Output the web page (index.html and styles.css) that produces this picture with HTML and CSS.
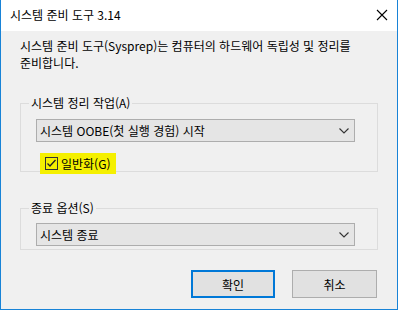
FILE: index.html
```html
<!DOCTYPE html>
<html lang="ko">
<head>
<meta charset="utf-8">
<link rel="stylesheet" href="styles.css">
</head>
<body>
<div class="window">
  <div class="titlebar">
    <span class="title">시스템 준비 도구 3.14</span>
    <svg class="close" width="12" height="12" viewBox="0 0 12 12"><path d="M1 1L11 11M11 1L1 11" stroke="#000" stroke-width="1.1" fill="none"/></svg>
  </div>
  <div class="content">
    <p class="desc">시스템 준비 도구(Sysprep)는 컴퓨터의 하드웨어 독립성 및 정리를<br>준비합니다.</p>
    <fieldset class="group g1">
      <legend>시스템 정리 작업(A)</legend>
      <div class="combo"><span>시스템 OOBE(첫 실행 경험) 시작</span>
        <svg class="chev" width="10" height="6" viewBox="0 0 10 6"><path d="M0.5 0.5L5 5L9.5 0.5" stroke="#333" stroke-width="1.1" fill="none"/></svg>
      </div>
      <div class="check">
        <span class="box"><svg width="11" height="11" viewBox="0 0 11 11"><path d="M1.5 5.5L4 8L9.5 2" stroke="#222" stroke-width="1.3" fill="none"/></svg></span>
        <span class="ctext">일반화(G)</span>
      </div>
    </fieldset>
    <fieldset class="group g2">
      <legend>종료 옵션(S)</legend>
      <div class="combo"><span>시스템 종료</span>
        <svg class="chev" width="10" height="6" viewBox="0 0 10 6"><path d="M0.5 0.5L5 5L9.5 0.5" stroke="#333" stroke-width="1.1" fill="none"/></svg>
      </div>
    </fieldset>
    <div class="buttons">
      <button class="btn primary">확인</button>
      <button class="btn">취소</button>
    </div>
  </div>
</div>
</body>
</html>
```
FILE: styles.css
```css
* { box-sizing: border-box; }
html, body { margin: 0; padding: 0; }
body {
  font-family: "Noto Sans CJK KR", "Noto Sans", sans-serif;
  font-size: 12px;
  color: #000;
  background: #f0f0f0;
}
.window {
  width: 398px;
  height: 310px;
  border: 1px solid #1883d7;
  border-top: none;
  background: #f0f0f0;
  display: flex;
  flex-direction: column;
}
.titlebar {
  height: 31px;
  background: #fff;
  display: flex;
  align-items: center;
  justify-content: space-between;
  padding: 0 9px 0 9px;
  flex: none;
}
.title { line-height: 16px; margin-top: -1px; }
.close { margin-top: -1px; }
.content {
  padding: 6px 19px 0 19px;
  display: flex;
  flex-direction: column;
}
.desc {
  margin: 0;
  line-height: 17px;
}
.group {
  margin: 0;
  border: 1px solid #dcdcdc;
  padding: 0 22px 0 15px;
  min-width: 0;
}
.group legend {
  padding: 0 2px;
  margin-left: -7px;
  line-height: 16px;
}
.g1 { margin-top: 24px; height: 77px; padding-top: 8px; }
.g2 { margin-top: 28px; height: 50px; padding-top: 7px; }
.combo {
  height: 23px;
  background: #e5e5e5;
  border: 1px solid #adadad;
  display: flex;
  align-items: center;
  justify-content: space-between;
  padding: 0 5px 0 3px;
}
.combo span { line-height: 16px; }
.chev { margin-top: 1px; }
.check {
  display: inline-flex;
  align-items: center;
  align-self: flex-start;
  background: #f5f000;
  margin-top: 11px;
  margin-left: 4px;
  padding: 3px 3px 3px 5px;
  gap: 3px;
  width: 76px;
}
.box {
  width: 13px;
  height: 13px;
  border: 1px solid #333;
  display: flex;
  align-items: center;
  justify-content: center;
}
.ctext { line-height: 15px; }
.buttons {
  display: flex;
  justify-content: flex-end;
  gap: 17px;
  margin-top: 20px;
  padding-right: 1px;
}
.btn {
  font: inherit;
  width: 85px;
  height: 28px;
  background: #e1e1e1;
  border: 1px solid #adadad;
  padding: 0;
  color: #000;
}
.primary {
  border: 2px solid #0078d7;
  width: 84px;
}
```
